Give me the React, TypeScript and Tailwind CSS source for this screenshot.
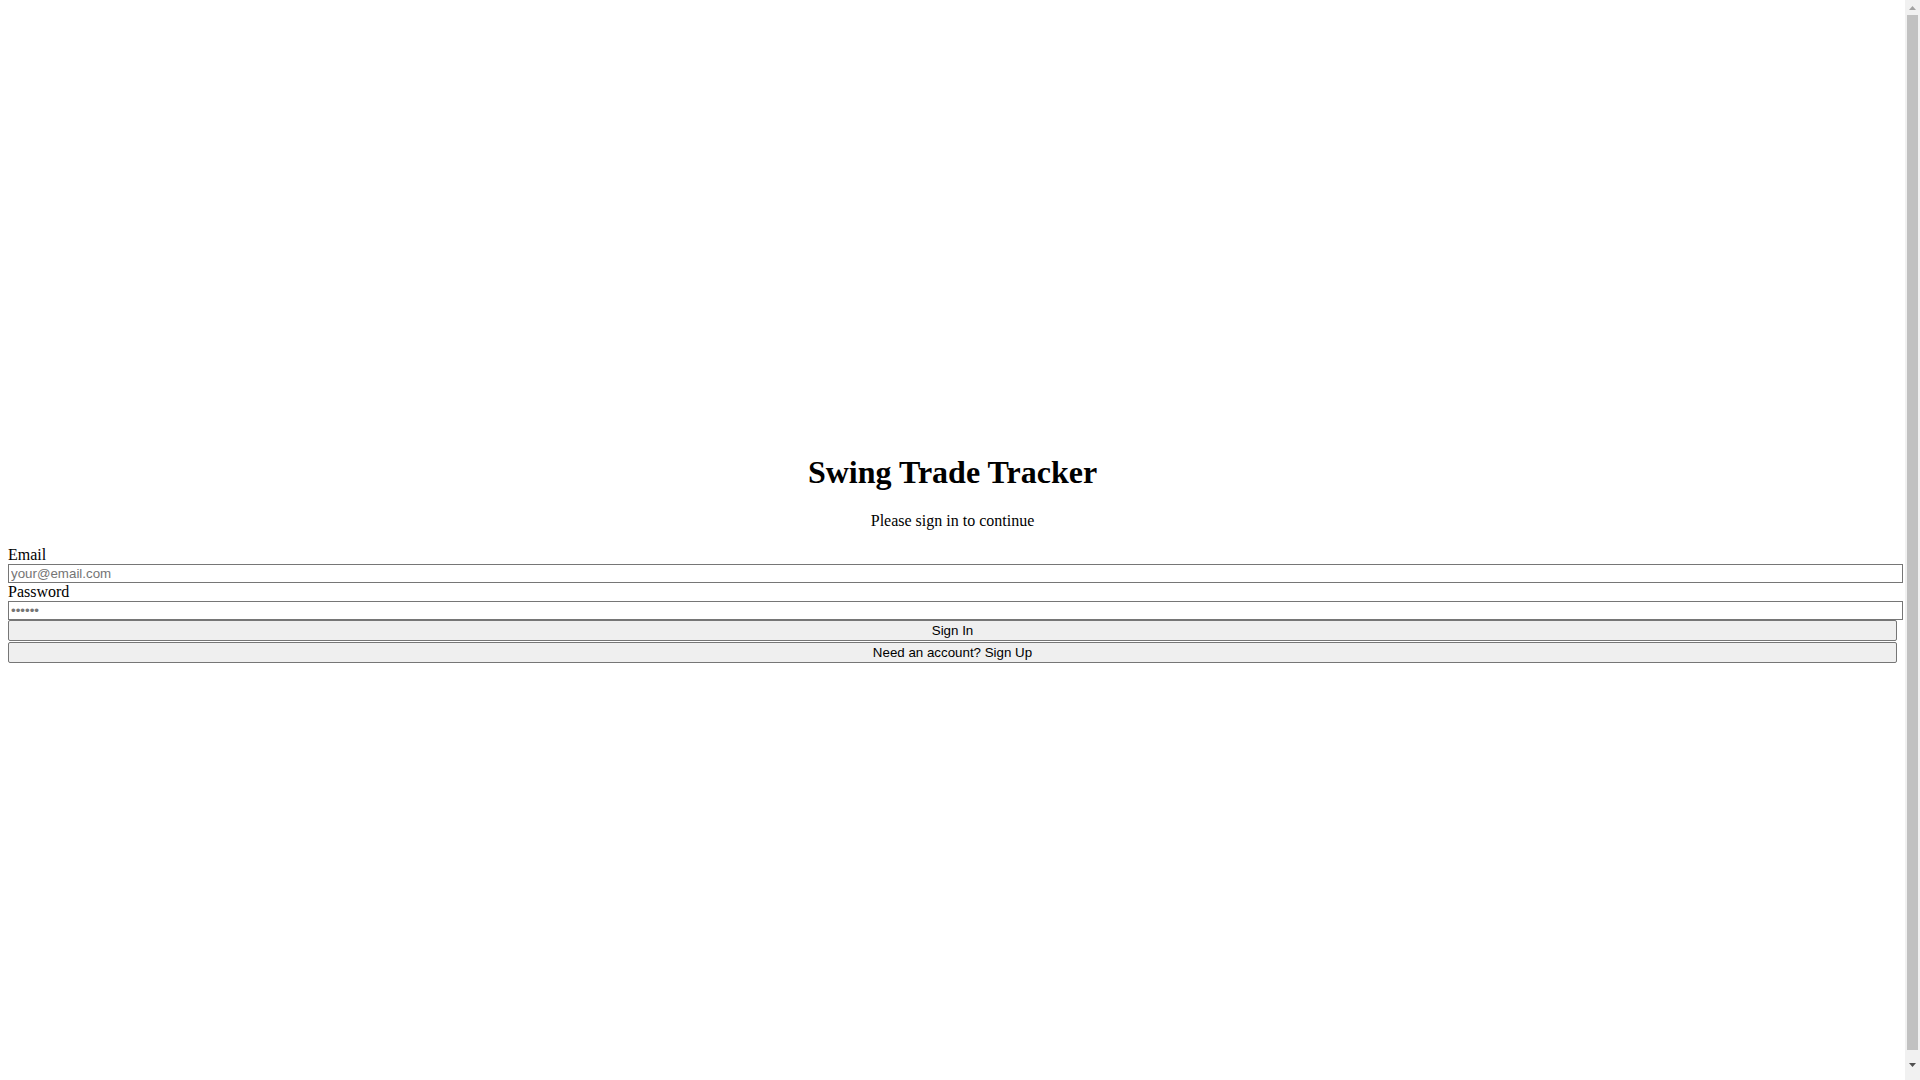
const inputCls =
  "block box-content w-full border border-[#767676] bg-white px-[2px] py-[1px] text-[13.333px] text-black placeholder:text-[#757575] font-['Liberation_Sans',Arial,sans-serif] outline-none";
const buttonCls =
  "block w-full rounded-[2px] border border-[#767676] bg-[#efefef] px-[6px] py-[2px] text-center text-[13.333px] text-black font-['Liberation_Sans',Arial,sans-serif]";

// classic page scrollbar, the page is a little taller than the window
function Scrollbar() {
  return (
    <div className="flex w-[15px] shrink-0 flex-col bg-[#f1f1f1]">
      <div className="flex h-[15px] items-center justify-center">
        <svg width="7" height="4" viewBox="0 0 7 4">
          <polygon points="3.5,0 7,4 0,4" fill="#a3a3a3" />
        </svg>
      </div>
      <div className="flex-1 px-[2px]">
        <div className="h-full bg-[#c1c1c1]" />
      </div>
      <div className="flex h-[30px] items-center justify-center">
        <svg width="7" height="4" viewBox="0 0 7 4">
          <polygon points="0,0 7,0 3.5,4" fill="#505050" />
        </svg>
      </div>
    </div>
  );
}

export default function App() {
  return (
    <div className="flex h-screen overflow-hidden bg-white text-black leading-[normal] font-['Liberation_Serif','Times_New_Roman',serif]">
      <div className="min-w-0 flex-1 p-2">
        <div className="min-h-screen flex flex-col justify-center">
          <div>
            <h1 className="my-[21.44px] text-center text-[32px] font-bold">Swing Trade Tracker</h1>
            <p className="my-4 text-center">Please sign in to continue</p>
            <form onSubmit={(e) => e.preventDefault()}>
              <label htmlFor="email" className="block">Email</label>
              <input id="email" type="email" placeholder="your@email.com" className={inputCls} />
              <label htmlFor="password" className="block">Password</label>
              <input id="password" type="password" placeholder="••••••" className={inputCls} />
              <button type="submit" className={buttonCls + " mb-[1px]"}>
                Sign In
              </button>
              <button type="button" className={buttonCls}>
                Need an account? Sign Up
              </button>
            </form>
          </div>
        </div>
      </div>
      <Scrollbar />
    </div>
  );
}
